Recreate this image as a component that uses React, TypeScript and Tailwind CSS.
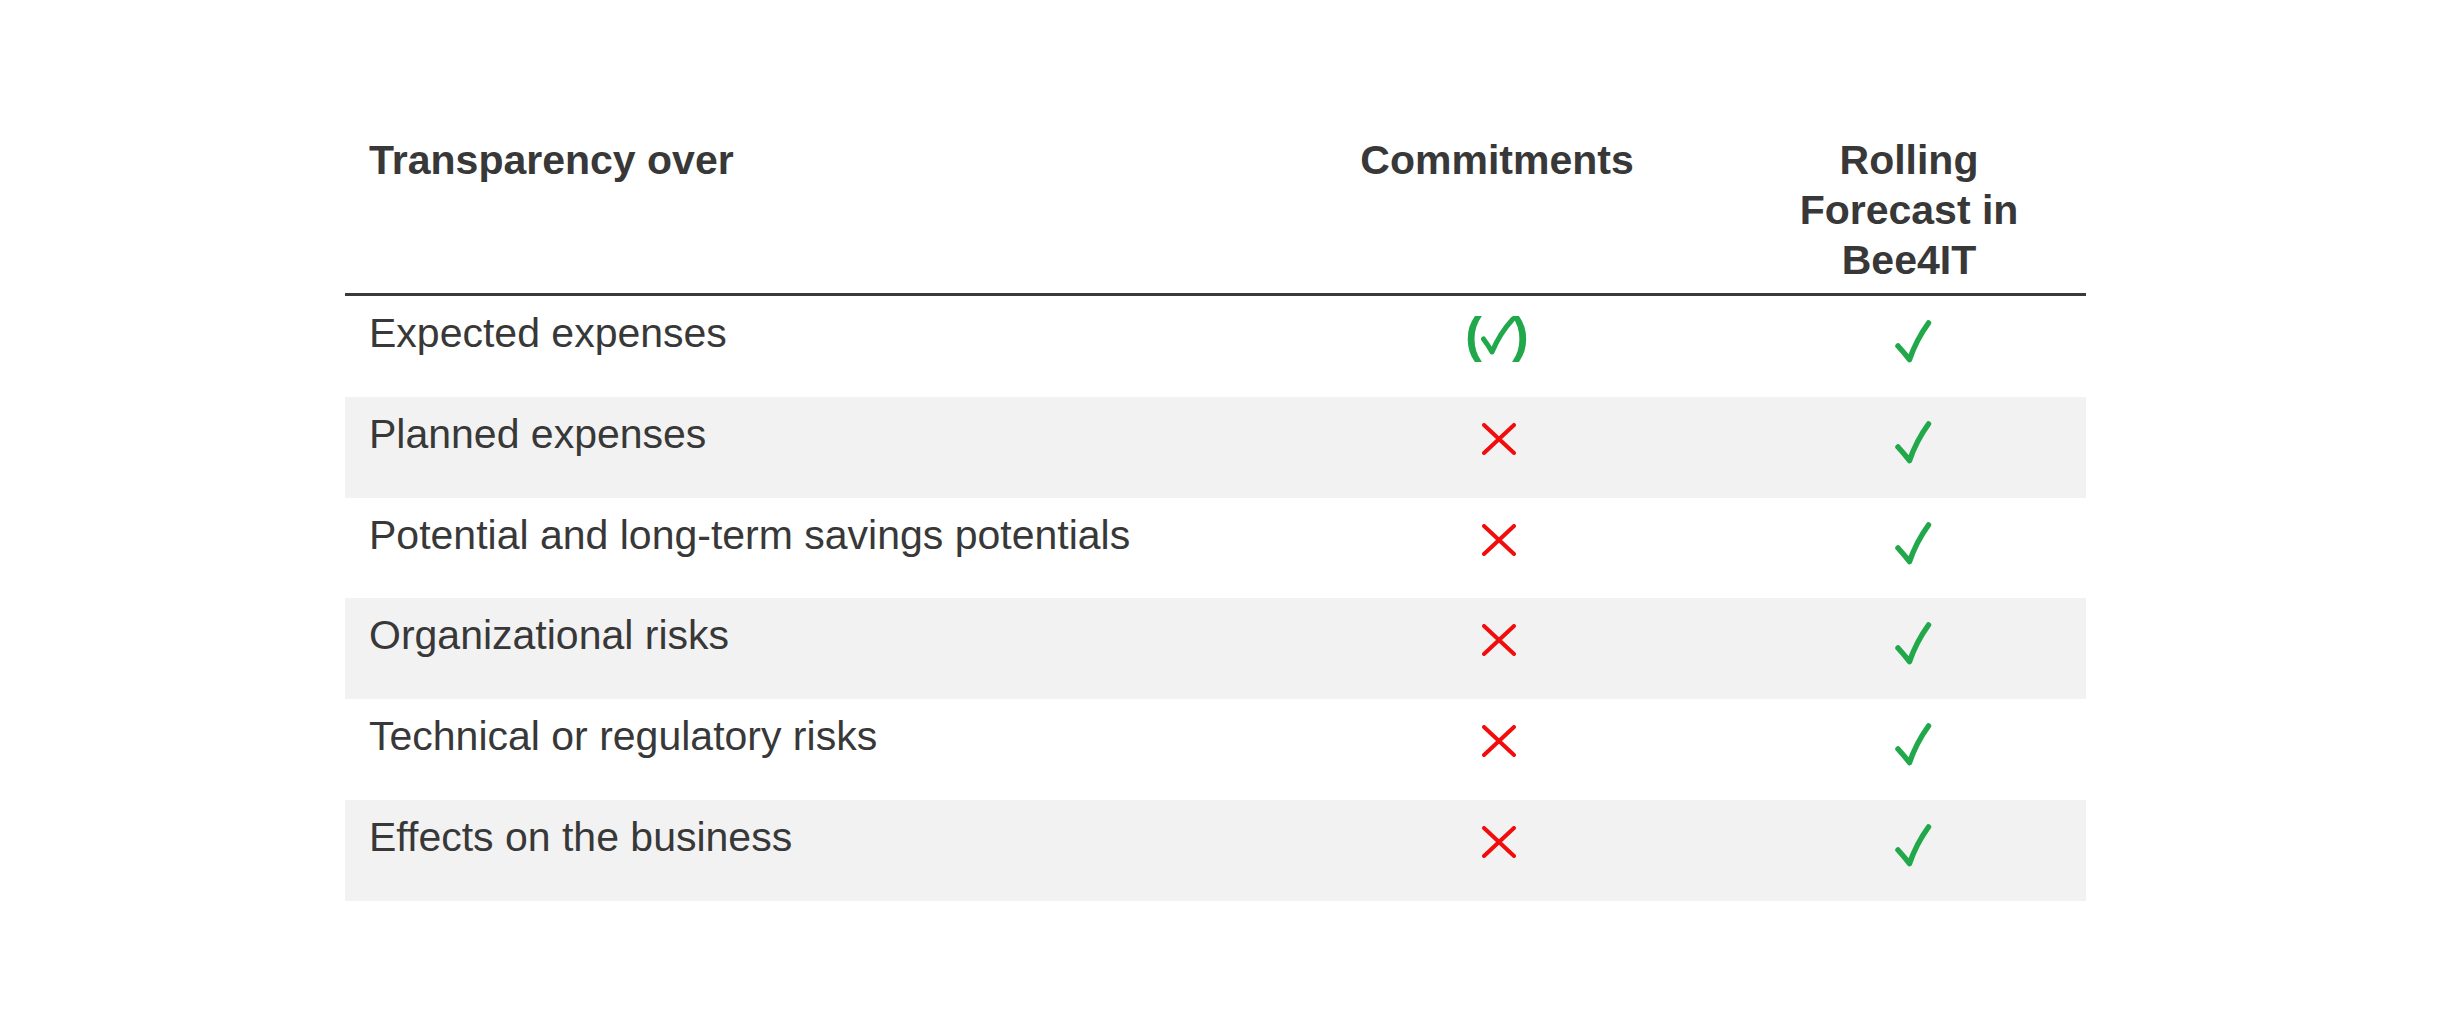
const rows = [
  { label: "Expected expenses", commit: "partial", gray: false },
  { label: "Planned expenses", commit: "no", gray: true },
  { label: "Potential and long-term savings potentials", commit: "no", gray: false },
  { label: "Organizational risks", commit: "no", gray: true },
  { label: "Technical or regulatory risks", commit: "no", gray: false },
  { label: "Effects on the business", commit: "no", gray: true },
];

const Check = ({ className = "" }: { className?: string }) => (
  <svg width="37" height="43" viewBox="0 0 37 43" className={className}>
    <path
      d="M3 26 Q8.5 32 14.5 39.5 Q21.5 19.5 33.5 3"
      fill="none"
      stroke="#21a84a"
      strokeWidth="5.5"
      strokeLinecap="round"
      strokeLinejoin="round"
    />
  </svg>
);

const Cross = () => (
  <svg width="34" height="32" viewBox="0 0 34 32" className="ml-[4px]">
    <path
      d="M2 2 L32 30 M32 2 L2 30"
      fill="none"
      stroke="#f20c0c"
      strokeWidth="4"
      strokeLinecap="round"
    />
  </svg>
);

const PartialCheck = () => (
  <div className="flex items-start text-[#21a84a] font-bold text-[50px] leading-[50px]">
    <span>(</span>
    <svg width="34" height="38" viewBox="0 0 34 38" className="mt-[7px] -ml-[1px] -mr-[3px]">
      <path
        d="M2.5 22 Q7 28 11 35 Q19 16 31.5 2.5"
        fill="none"
        stroke="#21a84a"
        strokeWidth="5"
        strokeLinecap="round"
        strokeLinejoin="round"
      />
    </svg>
    <span>)</span>
  </div>
);

export default function App() {
  return (
    <div
      className="min-h-screen bg-white pt-[135px] pl-[345px] text-[#383838]"
      style={{ fontFamily: '"Liberation Sans", Arial, sans-serif' }}
    >
      <div className="w-[1741px]">
        <div className="grid grid-cols-[917px_470px_354px] border-b-[3px] border-[#3a3a3a] font-bold text-[41px] leading-[50px]">
          <div className="pl-[24px] pb-[8px]">Transparency over</div>
          <div className="text-center pb-[8px]">Commitments</div>
          <div className="text-center pb-[8px]">
            Rolling
            <br />
            Forecast in
            <br />
            Bee4IT
          </div>
        </div>
        {rows.map((r) => (
          <div
            key={r.label}
            className={`grid grid-cols-[917px_470px_354px] h-[100.75px] text-[41px] leading-[50px] ${r.gray ? "bg-[#f2f2f2]" : "bg-white"}`}
          >
            <div className="pl-[24px] pt-[12px]">{r.label}</div>
            <div className={`flex justify-center ${r.commit === "partial" ? "pt-[14px]" : "pt-[26px]"}`}>
              {r.commit === "partial" ? <PartialCheck /> : <Cross />}
            </div>
            <div className="flex justify-center pt-[24px]">
              <Check className="ml-[8px]" />
            </div>
          </div>
        ))}
      </div>
    </div>
  );
}
